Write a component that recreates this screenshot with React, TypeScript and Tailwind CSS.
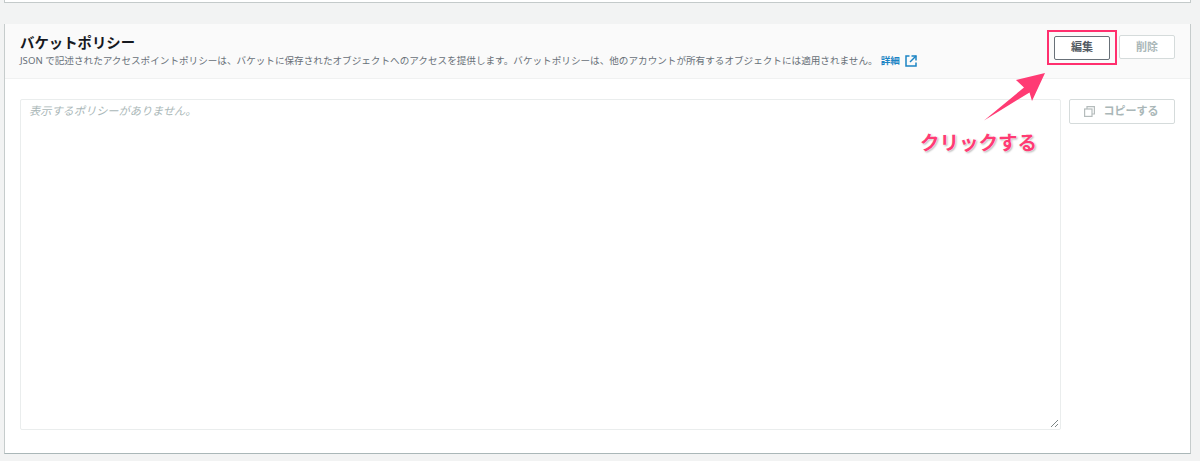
import React from 'react';

const FONT = "font-['Noto_Sans','Noto_Sans_CJK_JP','Liberation_Sans',sans-serif]";

function ExternalIcon() {
  return (
    <svg width="12" height="12" viewBox="0 0 12 12" fill="none" stroke="#1b84c4" strokeWidth="1.5" className="ml-[5px] shrink-0">
      <path d="M4.500 1H1v10h10V7.500" />
      <path d="M6.500 1H11v4.500" />
      <path d="M11 1 5 7" />
    </svg>
  );
}

function CopyIcon() {
  return (
    <svg width="11" height="11" viewBox="0 0 11 11" fill="none" stroke="#b5bcbc" strokeWidth="1.2" className="shrink-0">
      <rect x="0.6" y="3" width="7.4" height="7.4" />
      <path d="M3 3V0.6h7.4V8H8" />
    </svg>
  );
}

function Annotation() {
  return (
    <div className="absolute left-[915px] top-[70px] w-[200px] h-[90px] pointer-events-none">
      <svg width="70" height="56" viewBox="0 0 70 56" className="absolute left-[65px] top-[0px]">
        <path d="M4 50.500 L44 17.500 L36 10 L65 3 L52 31 L49.500 22.500 Z" fill="#ff3b74" />
      </svg>
      <span className="absolute left-[5px] top-[60px] text-[19.500px] leading-[26px] font-bold text-[#ff3b74] whitespace-nowrap [text-shadow:0_0_2px_#fff,0_0_2px_#fff,1px_1px_2px_#9a9a9a]">
        クリックする
      </span>
    </div>
  );
}

export default function App() {
  return (
    <div className={`relative w-[1200px] h-[461px] overflow-hidden bg-[#f2f3f3] ${FONT}`}>
      <div className="ml-[4px] w-[1187px] h-[3px] bg-white border-b border-r border-l border-[#c4caca]" />
      <section className="mt-[21px] ml-[4px] w-[1187px] h-[430px] bg-white border-r border-b border-l border-[#c6cccc] border-b-[#aab7b8] flex flex-col">
        <header className="h-[55px] bg-[#fafafa] border-b border-[#f0f1f1] flex justify-between pl-[15px] pr-[15px]">
          <div className="pt-[9px]">
            <h2 className="text-[14.400px] leading-[20px] font-bold text-[#16191f]">バケットポリシー</h2>
            <p className="flex items-center text-[9.600px] leading-[14px] mt-[1px] text-[#687078] whitespace-nowrap">
              JSON で記述されたアクセスポイントポリシーは、バケットに保存されたオブジェクトへのアクセスを提供します。バケットポリシーは、他のアカウントが所有するオブジェクトには適用されません。
              <a className="ml-[3px] text-[#1b84c4] font-bold">詳細</a>
              <ExternalIcon />
            </p>
          </div>
          <div className="flex items-start pt-[6px]">
            <div className="w-[70px] h-[35px] border-[2.500px] border-[#ff2f6e] flex items-center justify-center">
              <button className="w-[56px] h-[24px] rounded-[2px] bg-white border border-[#687078] text-[11px] font-bold text-[#545b64]">編集</button>
            </div>
            <button className="ml-[2px] mt-[5px] w-[56px] h-[24px] rounded-[2px] bg-white border border-[#d5dbdb] text-[11px] font-bold text-[#aab7b8]">削除</button>
          </div>
        </header>
        <div className="flex pt-[20px] pl-[15px] pr-[15px]">
          <div className="relative w-[1041px] h-[331px] bg-white border border-[#eaeded] rounded-[2px] pl-[8px] pt-[3px] text-[11.200px] leading-[16px] italic text-[#aab7b8]">
            表示するポリシーがありません。
            <svg width="9" height="9" viewBox="0 0 9 9" stroke="#7d8686" strokeWidth="1" className="absolute right-[1px] bottom-[1px]">
              <path d="M1 8 8 1M5 8 8 5" />
            </svg>
          </div>
          <button className="ml-[8px] w-[106px] h-[25px] rounded-[2px] bg-white border border-[#d5dbdb] flex items-center justify-center gap-[9px] pr-[2px] text-[11px] font-bold text-[#aab7b8]">
            <CopyIcon />
            コピーする
          </button>
        </div>
      </section>
      <Annotation />
    </div>
  );
}
